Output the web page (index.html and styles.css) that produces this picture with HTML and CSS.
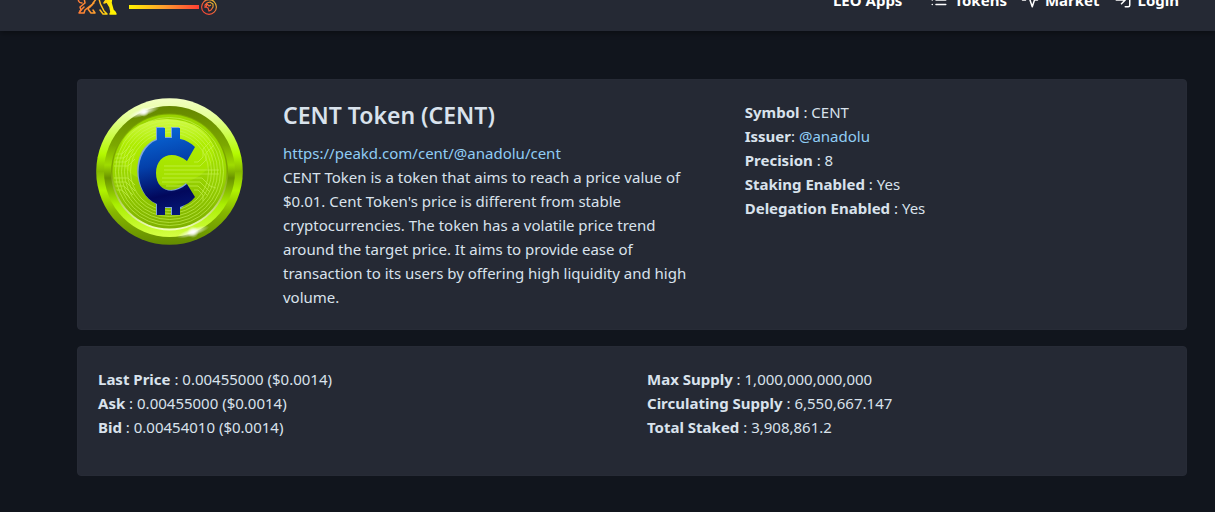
FILE: index.html
```html
<!DOCTYPE html>
<html lang="en">
<head>
  <meta charset="UTF-8" />
  <meta name="viewport" content="width=device-width, initial-scale=1.0"/>
  <title>CENT Token</title>

  <link rel="stylesheet" href="styles.css">
</head>
<body>

<header class="navbar">
  <a class="brand" href="#" aria-label="Home">
    <svg width="42" height="40" viewBox="0 0 42 40" fill="none" stroke="url(#lion)" stroke-width="1.5" stroke-linecap="round" stroke-linejoin="round">
      <defs>
        <linearGradient id="lion" gradientUnits="userSpaceOnUse" x1="2" y1="0" x2="36" y2="0">
          <stop offset="0" stop-color="#ff7a36"/>
          <stop offset=".5" stop-color="#ffa02e"/>
          <stop offset="1" stop-color="#fff200"/>
        </linearGradient>
      </defs>
      <path d="M3 22c-1 3-1 6 3 6M8 23l1 5-5 4 1 3-2 3h5l1-3 5-4 4-3"/>
      <path d="M4 36l4-4M17 28c0 3-4 4-5 6l3 4h4l-2-3M17 28l4-5"/>
      <path d="M22 21c2 4 1 7 4 11l2 4 3 3h-4l-3-4"/>
      <path fill="url(#lion)" d="M33 20l-5 8 3-1 3 5 1 5-1 2h6l-1-2-2-2-2-7 1-8z"/>
    </svg>
    <span class="brand-mark">
      <span class="brand-line"></span>
      <svg width="16" height="16" viewBox="0 0 16 16" fill="none">
        <defs>
          <linearGradient id="badge" x1="0" y1="1" x2="1" y2="0">
            <stop offset="0" stop-color="#ff3f34"/>
            <stop offset=".5" stop-color="#f5643a"/>
            <stop offset="1" stop-color="#e8d52a"/>
          </linearGradient>
        </defs>
        <circle cx="8" cy="8" r="7.4" stroke="url(#badge)" stroke-width="1.1"/>
        <path d="M4 9V6l2-2 3-1 3 2v3l-2 3-2 1-1-3-2-1 1-3 2 2 2-1" stroke="url(#badge)" stroke-width="1.1"/>
      </svg>
    </span>
  </a>
  <nav class="nav-links">
    <a class="nav-apps" href="#">LEO Apps</a>
    <a href="#">
      <svg class="nav-icon" viewBox="0 0 24 24"><path d="M8 6h13M8 12h13M8 18h13M3 6h.01M3 12h.01M3 18h.01"/></svg>
      Tokens
    </a>
    <a href="#">
      <svg class="nav-icon" viewBox="0 0 24 24"><path d="M22 12h-4l-3 9L9 3l-3 9H2"/></svg>
      Market
    </a>
    <a href="#">
      <svg class="nav-icon" viewBox="0 0 24 24"><path d="M15 3h4a2 2 0 0 1 2 2v14a2 2 0 0 1-2 2h-4M10 17l5-5-5-5M15 12H3"/></svg>
      Login
    </a>
  </nav>
</header>

<main class="container">
  <section class="card token">
    <svg class="coin" viewBox="0 0 147 147" role="img" aria-label="CENT coin">
      <defs>
        <linearGradient id="rim" x1="0" y1="0" x2="0" y2="1">
          <stop offset="0" stop-color="#f3ffc4"/>
          <stop offset=".12" stop-color="#e6ff9c"/>
          <stop offset=".38" stop-color="#b4fa00"/>
          <stop offset=".5" stop-color="#86b800"/>
          <stop offset=".63" stop-color="#b0f200"/>
          <stop offset=".78" stop-color="#85b500"/>
          <stop offset="1" stop-color="#638b00"/>
        </linearGradient>
        <linearGradient id="bevel" x1="0" y1="0" x2="0" y2="1">
          <stop offset="0" stop-color="#648600"/>
          <stop offset=".3" stop-color="#7ca800"/>
          <stop offset=".45" stop-color="#9fdc00"/>
          <stop offset=".55" stop-color="#6a9200"/>
          <stop offset=".75" stop-color="#a9ee00"/>
          <stop offset="1" stop-color="#d5ff45"/>
        </linearGradient>
        <linearGradient id="lip" x1="0" y1="0" x2="0" y2="1">
          <stop offset=".5" stop-color="#7ba500"/>
          <stop offset="1" stop-color="#f2ffc0"/>
        </linearGradient>
        <linearGradient id="face" x1="0" y1="0" x2="0" y2="1">
          <stop offset="0" stop-color="#9ad400"/>
          <stop offset=".4" stop-color="#a0de00"/>
          <stop offset="1" stop-color="#7fb000"/>
        </linearGradient>
        <linearGradient id="gloss" x1="0" y1="0" x2="0" y2="1">
          <stop offset="0" stop-color="#d0fb45"/>
          <stop offset=".4" stop-color="#aeec00"/>
          <stop offset="1" stop-color="#a2dd00"/>
        </linearGradient>
        <linearGradient id="cent" gradientUnits="userSpaceOnUse" x1="60" y1="30" x2="80" y2="118">
          <stop offset="0" stop-color="#0868d8"/>
          <stop offset=".4" stop-color="#0440aa"/>
          <stop offset=".75" stop-color="#02085c"/>
          <stop offset="1" stop-color="#051a78"/>
        </linearGradient>
        <radialGradient id="shine">
          <stop offset="0" stop-color="#fff"/>
          <stop offset="1" stop-color="#fff" stop-opacity="0"/>
        </radialGradient>
        <clipPath id="faceClip"><circle cx="73.5" cy="73.5" r="56"/></clipPath>
      </defs>
      <circle cx="73.5" cy="73.5" r="73.3" fill="url(#rim)"/>
      <circle cx="73.5" cy="73.5" r="65.5" fill="url(#bevel)"/>
      <circle cx="73.5" cy="74" r="58.5" fill="url(#lip)"/>
      <circle cx="73.5" cy="73.5" r="57" fill="url(#face)"/>
      <ellipse cx="71" cy="54" rx="47" ry="33" fill="url(#gloss)"/>
      <g clip-path="url(#faceClip)" fill="none" stroke="#cdf65a" stroke-width=".8" opacity=".75">
        <circle cx="73.5" cy="73.5" r="54"/>
        <circle cx="73.5" cy="73.5" r="51"/>
        <circle cx="73.5" cy="73.5" r="48"/>
        <circle cx="73.5" cy="73.5" r="45"/>
        <circle cx="73.5" cy="73.5" r="42"/>
        <circle cx="73.5" cy="73.5" r="39"/>
        <path d="M18 56h8l8-8M18 60h10l9-9M18 64h12l9-9M18 68h14l7-7M18 80h14l7 7M18 84h12l9 9M18 88h10l9 9M18 92h8l8 8"/>
        <path d="M68 68h36l6-6v-7l8-8M68 72h55M68 76h55M66 80h40l8 8 6 2M66 84h38l10 10M70 88h32l9 9M98 64h4l5-5v-8l8-8M98 92h4l5 5v6"/>
      </g>
      <!-- cent sign: light edge first, body on top -->
      <path transform="translate(-1 -1)" fill="#7fa6dc" d="M61 30h8v10h7V30h8v11l15 8-8 14c-16-12-32-4-32 12s16 25 32 11l8 14-15 13v5h-8v-7h-7v7h-8v-11C36 94 36 52 61 42z"/>
      <path fill="url(#cent)" d="M61 30h8v10h7V30h8v11c6 1 11 4 15 8l-8 14c-15-12-31-5-31 12s16 24 31 11l8 13c-4 5-9 8-15 10v8h-8v-8h-7v8h-8v-11C36 96 37 51 61 42z"/>
      <ellipse cx="48" cy="14" rx="17" ry="4" fill="url(#shine)" transform="rotate(-18 48 14)"/>
      <circle cx="48" cy="14" r="5" fill="url(#shine)"/>
      <ellipse cx="97" cy="134" rx="17" ry="4" fill="url(#shine)" transform="rotate(-18 97 134)"/>
      <circle cx="97" cy="134" r="6" fill="url(#shine)"/>
    </svg>

    <div class="token-info">
      <h1>CENT Token (CENT)</h1>
      <a href="https://peakd.com/cent/@anadolu/cent">https://peakd.com/cent/@anadolu/cent</a>
      <p>CENT Token is a token that aims to reach a price value of $0.01. Cent Token's price is different from stable cryptocurrencies. The token has a volatile price trend around the target price. It aims to provide ease of transaction to its users by offering high liquidity and high volume.</p>
    </div>

    <ul class="details">
      <li><strong>Symbol</strong> : CENT</li>
      <li><strong>Issuer</strong>: <a href="#">@anadolu</a></li>
      <li><strong>Precision</strong> : 8</li>
      <li><strong>Staking Enabled</strong> : Yes</li>
      <li><strong>Delegation Enabled</strong> : Yes</li>
    </ul>
  </section>

  <section class="card stats">
    <ul>
      <li><strong>Last Price</strong> : 0.00455000 ($0.0014)</li>
      <li><strong>Ask</strong> : 0.00455000 ($0.0014)</li>
      <li><strong>Bid</strong> : 0.00454010 ($0.0014)</li>
    </ul>
    <ul>
      <li><strong>Max Supply</strong> : 1,000,000,000,000</li>
      <li><strong>Circulating Supply</strong> : 6,550,667.147</li>
      <li><strong>Total Staked</strong> : 3,908,861.2</li>
    </ul>
  </section>
</main>

</body>
</html>
```
FILE: styles.css
```css
* {
  box-sizing: border-box;
}

body {
  margin: 0;
  background: #11151d;
  color: #d9e2ec;
  font-family: "Segoe UI", "Noto Sans", sans-serif;
  font-size: 15px;
  line-height: 24px;
}

a {
  color: #90cdf4;
  text-decoration: none;
}

ul {
  list-style: none;
  margin: 0;
  padding: 0;
}

/* Navbar */
.navbar {
  display: flex;
  justify-content: space-between;
  align-items: flex-end;
  height: 31px;
  padding: 0 36px 0 76px;
  background: #252934;
  box-shadow: 0 2px 6px rgba(0, 0, 0, 0.4);
  overflow: hidden;
}

.brand {
  display: flex;
  align-items: flex-end;
  gap: 11px;
  padding-bottom: 16px;
}

.brand-mark {
  display: flex;
  align-items: center;
  gap: 2px;
}

.brand-line {
  width: 70px;
  height: 4px;
  background: linear-gradient(to right, #fff200, #ff9d2e 50%, #ff3f34);
}

.nav-links {
  display: flex;
  gap: 14px;
  padding-bottom: 19px;
}

.nav-links a {
  display: flex;
  align-items: center;
  gap: 6px;
  color: #fff;
  font-weight: bold;
}

.nav-links .nav-apps {
  margin-right: 14px;
}

.nav-icon {
  width: 18px;
  height: 18px;
  fill: none;
  stroke: currentColor;
  stroke-width: 2;
  stroke-linecap: round;
  stroke-linejoin: round;
}

/* Cards */
.container {
  padding: 48px 28px 36px 77px;
}

.card {
  display: grid;
  column-gap: 30px;
  margin-bottom: 16px;
  background: #252934;
  border: 1px solid #272b36;
  border-radius: 4px;
}

.token {
  grid-template-columns: 157px 51fr 50fr;
  padding: 18px;
}

.coin {
  width: 147px;
  height: 147px;
}

.token-info,
.details {
  padding: 2px 0;
}

.token-info {
  padding-right: 20px;
}

.token-info h1 {
  margin: 0 0 11px;
  font-size: 23px;
  font-weight: 600;
  line-height: 30px;
}

.token-info p {
  margin: 0;
}

.stats {
  grid-template-columns: 1fr 1fr;
  padding: 20px 20px 36px;
}
```
